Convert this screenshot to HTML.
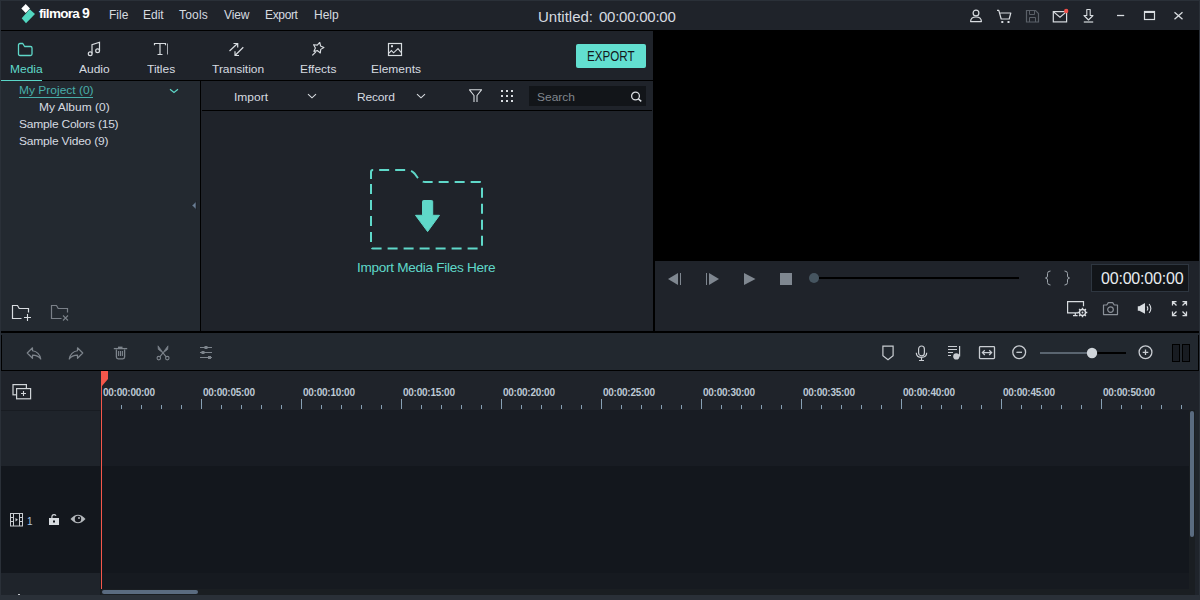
<!DOCTYPE html><html><head><meta charset="utf-8"><style>
html,body{margin:0;padding:0;width:1200px;height:600px;overflow:hidden;background:#1e2229;font-family:"Liberation Sans", sans-serif;}
body{position:relative}
svg{display:block}
</style></head><body>
<div style="position:absolute;left:0px;top:0px;width:1200px;height:600px;background:#2a3038;"></div><div style="position:absolute;left:1px;top:1px;width:1198px;height:29px;background:#1f232a;"></div><div style="position:absolute;left:1px;top:30px;width:1198px;height:1px;background:#000;"></div><svg style="position:absolute;left:16px;top:2px;" width="22" height="24" viewBox="0 0 22 24"><path d="M9.7 2 L14 6.5 L9.7 11 L5.3 6.5 Z" fill="#fff"/><path d="M13.7 7.3 L19 12 L10 21.3 L5.7 16.3 Z" fill="#52d6c0"/></svg><div style="position:absolute;left:39px;top:6.57px;font-size:13.5px;line-height:13.5px;color:#fff;white-space:nowrap;font-weight:bold;letter-spacing:-0.7px;">filmora</div><div style="position:absolute;left:82px;top:6.15px;font-size:14px;line-height:14px;color:#fff;white-space:nowrap;font-weight:bold;">9</div><div style="position:absolute;left:109px;top:8.84px;font-size:12px;line-height:12px;color:#d6dbe0;white-space:nowrap;letter-spacing:0px;">File</div><div style="position:absolute;left:143px;top:8.84px;font-size:12px;line-height:12px;color:#d6dbe0;white-space:nowrap;letter-spacing:0px;">Edit</div><div style="position:absolute;left:179px;top:8.84px;font-size:12px;line-height:12px;color:#d6dbe0;white-space:nowrap;letter-spacing:0.2px;">Tools</div><div style="position:absolute;left:224px;top:8.84px;font-size:12px;line-height:12px;color:#d6dbe0;white-space:nowrap;letter-spacing:-0.1px;">View</div><div style="position:absolute;left:265px;top:8.84px;font-size:12px;line-height:12px;color:#d6dbe0;white-space:nowrap;letter-spacing:-0.35px;">Export</div><div style="position:absolute;left:314px;top:8.84px;font-size:12px;line-height:12px;color:#d6dbe0;white-space:nowrap;letter-spacing:0px;">Help</div><div style="position:absolute;left:538px;top:9.30px;font-size:15px;line-height:15px;color:#d6dbe0;white-space:nowrap;letter-spacing:0px;">Untitled:</div><div style="position:absolute;left:599px;top:9.30px;font-size:15px;line-height:15px;color:#d6dbe0;white-space:nowrap;letter-spacing:-0.25px;">00:00:00:00</div><svg style="position:absolute;left:968px;top:8px;" width="16" height="16" viewBox="0 0 16 16"><circle cx="8" cy="5" r="2.9" fill="none" stroke="#d8dce0" stroke-width="1.2"/><path d="M2.6 13.6 Q2.6 9 8 9 Q13.4 9 13.4 13.6 Z" fill="none" stroke="#d8dce0" stroke-width="1.2" stroke-linejoin="round"/></svg><svg style="position:absolute;left:996px;top:8px;" width="18" height="16" viewBox="0 0 18 16"><path d="M1 2.3 H2.8 L5.2 11 H13.2 L14.8 5 H4.2" fill="none" stroke="#d8dce0" stroke-width="1.2" stroke-linejoin="round"/><rect x="5.3" y="13" width="2" height="2" fill="#d8dce0"/><rect x="11.5" y="13" width="2" height="2" fill="#d8dce0"/></svg><svg style="position:absolute;left:1025px;top:9px;" width="15" height="14" viewBox="0 0 15 14"><path d="M1.5 1.5 H10.5 L13.5 4.5 V13 H1.5 Z" fill="none" stroke="#5a6068" stroke-width="1.2"/><path d="M4.5 1.5 V5.5 H9.5 V1.5 M4.5 13 V8.5 H10.5 V13" fill="none" stroke="#5a6068" stroke-width="1"/></svg><svg style="position:absolute;left:1051px;top:8px;" width="19" height="16" viewBox="0 0 19 16"><rect x="2.3" y="3.6" width="13.3" height="10.3" fill="none" stroke="#d8dce0" stroke-width="1.2"/><path d="M2.3 3.6 L9 9.2 L15.6 3.6" fill="none" stroke="#d8dce0" stroke-width="1.2"/><circle cx="15.2" cy="3" r="2.2" fill="#f0504a"/></svg><svg style="position:absolute;left:1082px;top:8px;" width="14" height="16" viewBox="0 0 14 16"><path d="M4.8 1.5 H8.2 V7.5 H11 L6.5 12 L2 7.5 H4.8 Z" fill="none" stroke="#d8dce0" stroke-width="1.1" stroke-linejoin="round"/><path d="M1.8 14 H11.2" stroke="#d8dce0" stroke-width="1.2"/></svg><svg style="position:absolute;left:1116px;top:14px;" width="10" height="3" viewBox="0 0 10 3"><path d="M1 1.5 H8.2" stroke="#d8dce0" stroke-width="1.3"/></svg><svg style="position:absolute;left:1143px;top:10px;" width="13" height="11" viewBox="0 0 13 11"><rect x="1.5" y="1.5" width="10" height="8" fill="none" stroke="#d8dce0" stroke-width="1.2"/><path d="M1 2 H12" stroke="#d8dce0" stroke-width="2"/></svg><svg style="position:absolute;left:1173px;top:10px;" width="11" height="11" viewBox="0 0 11 11"><path d="M1.5 2.3 L9.5 9.3 M9.5 2.3 L1.5 9.3" stroke="#d8dce0" stroke-width="1.3"/></svg><div style="position:absolute;left:1px;top:31px;width:652px;height:49px;background:#1f232a;"></div><div style="position:absolute;left:1px;top:80px;width:652px;height:1px;background:#000;"></div><div style="position:absolute;left:1px;top:80px;width:41px;height:1px;background:#5ad6c8;"></div><svg style="position:absolute;left:17px;top:41px;" width="17" height="16" viewBox="0 0 17 16"><path d="M1.5 4 Q1.5 2.5 3 2.5 H5.8 L7.6 5.5 H13.5 Q15 5.5 15 7 V13 Q15 14.5 13.5 14.5 H3 Q1.5 14.5 1.5 13 Z" fill="none" stroke="#5fd8c9" stroke-width="1.3" stroke-linejoin="round"/></svg><div style="position:absolute;left:10px;top:63.69px;font-size:11px;line-height:11px;color:#5fd8c9;white-space:nowrap;transform:scaleX(1.09);transform-origin:0 0;">Media</div><svg style="position:absolute;left:87px;top:41px;" width="15" height="16" viewBox="0 0 15 16"><path d="M5 12.5 V3.8 L12.5 1.3 V9.8" fill="none" stroke="#d8dce0" stroke-width="1.2"/><circle cx="3.2" cy="12.8" r="1.9" fill="none" stroke="#d8dce0" stroke-width="1.2"/><circle cx="10.6" cy="9.8" r="1.9" fill="none" stroke="#d8dce0" stroke-width="1.2"/></svg><div style="position:absolute;left:79px;top:63.69px;font-size:11px;line-height:11px;color:#d6dbe0;white-space:nowrap;transform:scaleX(1.09);transform-origin:0 0;">Audio</div><svg style="position:absolute;left:153px;top:42px;" width="16" height="15" viewBox="0 0 16 15"><path d="M1.5 3.2 V1.5 H12.5 V3.2 M7 1.5 V12.5 M4.5 12.5 H9.5" fill="none" stroke="#d8dce0" stroke-width="1.2"/><path d="M14.5 1.5 V12.5" stroke="#b8bcc2" stroke-width="0.9"/></svg><div style="position:absolute;left:147px;top:63.69px;font-size:11px;line-height:11px;color:#d6dbe0;white-space:nowrap;transform:scaleX(1.09);transform-origin:0 0;">Titles</div><svg style="position:absolute;left:228px;top:42px;" width="17" height="15" viewBox="0 0 17 15"><path d="M1.5 9 L9.5 1.5 M5.5 1.5 H9.7 V5.5 M15.3 5.3 L7 13.5 M11 13.5 H7 V9.3" fill="none" stroke="#d8dce0" stroke-width="1.2"/></svg><div style="position:absolute;left:212px;top:63.69px;font-size:11px;line-height:11px;color:#d6dbe0;white-space:nowrap;transform:scaleX(1.09);transform-origin:0 0;">Transition</div><svg style="position:absolute;left:310px;top:42px;" width="16" height="15" viewBox="0 0 16 15"><path d="M9.75 0.39 L10.55 3.97 L13.89 5.51 L10.73 7.38 L10.31 11.03 L7.55 8.60 L3.95 9.32 L5.40 5.95 L3.60 2.75 L7.26 3.09 Z" fill="none" stroke="#d8dce0" stroke-width="1.15" stroke-linejoin="round"/><path d="M2.3 13.3 L5.8 9.8" stroke="#d8dce0" stroke-width="1.2"/></svg><div style="position:absolute;left:300px;top:63.69px;font-size:11px;line-height:11px;color:#d6dbe0;white-space:nowrap;transform:scaleX(1.09);transform-origin:0 0;">Effects</div><svg style="position:absolute;left:387px;top:42px;" width="16" height="15" viewBox="0 0 16 15"><rect x="1.5" y="1.5" width="13" height="12" fill="none" stroke="#d8dce0" stroke-width="1.2"/><rect x="4" y="3.2" width="2" height="2" fill="#d8dce0"/><path d="M2 11.2 L4.4 8.6 L6.6 10.8 L11 6.6 L14 10.4" fill="none" stroke="#d8dce0" stroke-width="1.1"/></svg><div style="position:absolute;left:371px;top:63.69px;font-size:11px;line-height:11px;color:#d6dbe0;white-space:nowrap;transform:scaleX(1.09);transform-origin:0 0;">Elements</div><div style="position:absolute;left:576px;top:44px;width:70px;height:24px;background:#62dfd0;border-radius:2px;"></div><div style="position:absolute;left:587px;top:49.15px;font-size:14px;line-height:14px;color:#14181d;white-space:nowrap;transform:scaleX(0.83);transform-origin:0 0;">EXPORT</div><div style="position:absolute;left:1px;top:81px;width:199px;height:250px;background:#232930;"></div><div style="position:absolute;left:200px;top:81px;width:1px;height:250px;background:#000;"></div><div style="position:absolute;left:19px;top:84.69px;font-size:11px;line-height:11px;color:#48aeaa;white-space:nowrap;transform:scaleX(1.09);transform-origin:0 0;">My Project (0)</div><div style="position:absolute;left:19px;top:97px;width:74px;height:1px;background:#48aeaa;"></div><svg style="position:absolute;left:169px;top:87px;" width="11" height="8" viewBox="0 0 11 8"><path d="M1 2.3 L5 5.4 L9 2.3" fill="none" stroke="#5fd8c9" stroke-width="1.2"/></svg><div style="position:absolute;left:39px;top:101.69px;font-size:11px;line-height:11px;color:#d6dbe0;white-space:nowrap;transform:scaleX(1.09);transform-origin:0 0;">My Album (0)</div><div style="position:absolute;left:19px;top:118.69px;font-size:11px;line-height:11px;color:#d6dbe0;white-space:nowrap;transform:scaleX(1.09);transform-origin:0 0;letter-spacing:-0.2px;">Sample Colors (15)</div><div style="position:absolute;left:19px;top:135.69px;font-size:11px;line-height:11px;color:#d6dbe0;white-space:nowrap;transform:scaleX(1.09);transform-origin:0 0;letter-spacing:-0.18px;">Sample Video (9)</div><svg style="position:absolute;left:190px;top:200px;" width="8" height="11" viewBox="0 0 8 11"><path d="M6 1.5 L2 5.5 L6 9.5 Z" fill="#6a7e95" stroke="#15191e" stroke-width="0.6" stroke-linejoin="round"/></svg><svg style="position:absolute;left:11px;top:303px;" width="23" height="19" viewBox="0 0 23 19"><path d="M10.5 15.5 H1.5 V2.5 H6.5 L8.2 5.5 H17.5 V9.5" fill="none" stroke="#d8dce0" stroke-width="1.2"/><path d="M16.5 11 V18 M13 14.5 H20" stroke="#d8dce0" stroke-width="1.1"/></svg><svg style="position:absolute;left:50px;top:303px;" width="23" height="19" viewBox="0 0 23 19"><path d="M11.5 15.5 H1.5 V2.5 H6.5 L8.2 5.5 H17.5 V9.5" fill="none" stroke="#7a8088" stroke-width="1.2"/><path d="M13 12.5 L18 17.5 M18 12.5 L13 17.5" stroke="#7a8088" stroke-width="1.1"/></svg><div style="position:absolute;left:201px;top:81px;width:452px;height:250px;background:#1f232a;"></div><div style="position:absolute;left:202px;top:110px;width:450px;height:1px;background:#000;"></div><div style="position:absolute;left:234px;top:91.69px;font-size:11px;line-height:11px;color:#d6dbe0;white-space:nowrap;transform:scaleX(1.09);transform-origin:0 0;">Import</div><svg style="position:absolute;left:306px;top:91px;" width="12" height="8" viewBox="0 0 12 8"><path d="M2 3.2 L6 6.8 L10 3.2" fill="none" stroke="#d8dce0" stroke-width="1.1"/></svg><div style="position:absolute;left:357px;top:91.69px;font-size:11px;line-height:11px;color:#d6dbe0;white-space:nowrap;transform:scaleX(1.09);transform-origin:0 0;letter-spacing:-0.15px;">Record</div><svg style="position:absolute;left:415px;top:91px;" width="12" height="8" viewBox="0 0 12 8"><path d="M2 3.2 L6 6.8 L10 3.2" fill="none" stroke="#d8dce0" stroke-width="1.1"/></svg><svg style="position:absolute;left:468px;top:88px;" width="16" height="15" viewBox="0 0 16 15"><path d="M9 14 V7.5 L13.5 1.8 H1.5 L6 7.5 V14" fill="none" stroke="#d8dce0" stroke-width="1.1" stroke-linejoin="round"/></svg><svg style="position:absolute;left:500px;top:89px;" width="14" height="14" viewBox="0 0 14 14"><rect x="1" y="1" width="2" height="2" fill="#d8dce0"/><rect x="1" y="6" width="2" height="2" fill="#d8dce0"/><rect x="1" y="11" width="2" height="2" fill="#d8dce0"/><rect x="6" y="1" width="2" height="2" fill="#d8dce0"/><rect x="6" y="6" width="2" height="2" fill="#d8dce0"/><rect x="6" y="11" width="2" height="2" fill="#d8dce0"/><rect x="11" y="1" width="2" height="2" fill="#d8dce0"/><rect x="11" y="6" width="2" height="2" fill="#d8dce0"/><rect x="11" y="11" width="2" height="2" fill="#d8dce0"/></svg><div style="position:absolute;left:529px;top:86px;width:117px;height:20px;background:#121519;"></div><div style="position:absolute;left:537px;top:91.69px;font-size:11px;line-height:11px;color:#80868d;white-space:nowrap;transform:scaleX(1.09);transform-origin:0 0;">Search</div><svg style="position:absolute;left:630px;top:90px;" width="13" height="13" viewBox="0 0 13 13"><circle cx="5.5" cy="6" r="3.9" fill="none" stroke="#d8dce0" stroke-width="1.3"/><path d="M8.3 8.8 L11.3 11.3" stroke="#d8dce0" stroke-width="1.5"/></svg><svg style="position:absolute;left:368px;top:167px;" width="117" height="85" viewBox="0 0 117 85"><path d="M3 14 V5 Q3 3 5 3 H39.5 Q43.5 3 46.5 6.5 L49.5 10.5 Q53 15 57 15 H112 Q114 15 114 17 V79.6 Q114 81.6 112 81.6 H5 Q3 81.6 3 79.6 Z" fill="none" stroke="#5fd8c9" stroke-width="2" stroke-dasharray="10 6" stroke-dashoffset="-2"/><path d="M54.5 34.5 Q54.5 33.5 55.5 33.5 H63.7 Q64.7 33.5 64.7 34.5 V48.3 H71.5 L59.6 64.6 L47.5 48.3 H54.5 Z" fill="#5fd8c9" stroke="#5fd8c9" stroke-width="1" stroke-linejoin="round"/></svg><div style="position:absolute;left:357px;top:261.49px;font-size:13.6px;line-height:13.6px;color:#5fd8c9;white-space:nowrap;letter-spacing:-0.3px;">Import Media Files Here</div><div style="position:absolute;left:653px;top:31px;width:546px;height:230px;background:#000;"></div><div style="position:absolute;left:653px;top:261px;width:2px;height:70px;background:#000;"></div><div style="position:absolute;left:655px;top:261px;width:544px;height:70px;background:#1f232a;"></div><svg style="position:absolute;left:667px;top:272px;" width="16" height="14" viewBox="0 0 16 14"><path d="M11 1 V13 L1 7 Z" fill="#7f8790"/><rect x="13" y="1" width="1" height="12" fill="#7f8790"/></svg><svg style="position:absolute;left:705px;top:272px;" width="16" height="14" viewBox="0 0 16 14"><rect x="1" y="1" width="1" height="12" fill="#7f8790"/><path d="M4 1 V13 L14 7 Z" fill="#7f8790"/></svg><svg style="position:absolute;left:743px;top:272px;" width="14" height="14" viewBox="0 0 14 14"><path d="M1 1 V13 L12.5 7 Z" fill="#7f8790"/></svg><div style="position:absolute;left:780px;top:273px;width:12px;height:12px;background:#7f8790;"></div><div style="position:absolute;left:819px;top:277px;width:200px;height:2px;background:#000;"></div><svg style="position:absolute;left:808px;top:272px;" width="12" height="12" viewBox="0 0 12 12"><circle cx="6" cy="6" r="5" fill="#465560"/></svg><svg style="position:absolute;left:1044px;top:270px;" width="8" height="16" viewBox="0 0 8 16"><path d="M6.5 1 Q3.5 1 3.5 3.5 V6 Q3.5 8 1.5 8 Q3.5 8 3.5 10 V12.5 Q3.5 15 6.5 15" fill="none" stroke="#a0a7ae" stroke-width="1"/></svg><svg style="position:absolute;left:1063px;top:270px;" width="8" height="16" viewBox="0 0 8 16"><path d="M1.5 1 Q4.5 1 4.5 3.5 V6 Q4.5 8 6.5 8 Q4.5 8 4.5 10 V12.5 Q4.5 15 1.5 15" fill="none" stroke="#a0a7ae" stroke-width="1"/></svg><div style="position:absolute;left:1091px;top:264px;width:98px;height:28px;background:#2e3640;"></div><div style="position:absolute;left:1092px;top:265px;width:96px;height:26px;background:#121519;"></div><div style="position:absolute;left:1101px;top:270.96px;font-size:16px;line-height:16px;color:#e8ecf0;white-space:nowrap;letter-spacing:-0.2px;">00:00:00:00</div><svg style="position:absolute;left:1065px;top:299px;" width="24" height="20" viewBox="0 0 24 20"><path d="M18.5 7.2 V2.6 H2.6 V13.8 H13.2 M10.3 13.8 V16.6 M8 16.6 H12.6" fill="none" stroke="#d8dce0" stroke-width="1.2"/><circle cx="17.5" cy="13.5" r="3" fill="none" stroke="#d8dce0" stroke-width="1.3"/><path d="M20.70 13.50 L22.30 13.50 M19.76 15.76 L20.89 16.89 M17.50 16.70 L17.50 18.30 M15.24 15.76 L14.11 16.89 M14.30 13.50 L12.70 13.50 M15.24 11.24 L14.11 10.11 M17.50 10.30 L17.50 8.70 M19.76 11.24 L20.89 10.11" stroke="#d8dce0" stroke-width="1.4"/><circle cx="17.5" cy="13.5" r="0.9" fill="#d8dce0"/></svg><svg style="position:absolute;left:1102px;top:300px;" width="17" height="16" viewBox="0 0 17 16"><path d="M1.5 5 H4.8 L6.3 2.6 H10.7 L12.2 5 H15.5 V14.6 H1.5 Z" fill="none" stroke="#8a9098" stroke-width="1.2" stroke-linejoin="round"/><circle cx="8.5" cy="9.6" r="2.8" fill="none" stroke="#8a9098" stroke-width="1.2"/></svg><svg style="position:absolute;left:1137px;top:302px;" width="16" height="13" viewBox="0 0 16 13"><path d="M0.8 4.2 H2.3 L8 1 V11.8 L2.3 8.8 H0.8 Z" fill="#d8dce0"/><path d="M10 4.3 Q11.6 6.4 10 8.5 M12.1 2 Q15.6 6.4 12.1 10.8" fill="none" stroke="#d8dce0" stroke-width="1.1"/></svg><svg style="position:absolute;left:1171px;top:300px;" width="17" height="17" viewBox="0 0 17 17"><path d="M1.5 5.5 V1.5 H5.5 M1.5 1.5 L5.5 5.5 M15.5 5.5 V1.5 H11.5 M15.5 1.5 L11.5 5.5 M1.5 11.5 V15.5 H5.5 M1.5 15.5 L5.5 11.5 M15.5 11.5 V15.5 H11.5 M15.5 15.5 L11.5 11.5" fill="none" stroke="#d8dce0" stroke-width="1.25"/></svg><div style="position:absolute;left:1px;top:331px;width:1198px;height:2px;background:#000;"></div><div style="position:absolute;left:1px;top:333px;width:1198px;height:261px;background:#22282f;"></div><div style="position:absolute;left:1px;top:335px;width:1198px;height:36px;background:#000;"></div><div style="position:absolute;left:2px;top:335px;width:1196px;height:35px;background:#22282f;"></div><svg style="position:absolute;left:24px;top:344px;" width="20" height="20" viewBox="0 0 20 20"><g transform="translate(1,0) scale(0.75)"><path d="M10 9 V5 L3 12 L10 19 V14.9 C15 14.9 18.5 16.5 21 20 C20 15 17 10 10 9 Z" fill="none" stroke="#7d848c" stroke-width="1.6" stroke-linejoin="round"/></g></svg><svg style="position:absolute;left:66px;top:344px;" width="20" height="20" viewBox="0 0 20 20"><g transform="translate(19,0) scale(-0.75,0.75)"><path d="M10 9 V5 L3 12 L10 19 V14.9 C15 14.9 18.5 16.5 21 20 C20 15 17 10 10 9 Z" fill="none" stroke="#7d848c" stroke-width="1.6" stroke-linejoin="round"/></g></svg><svg style="position:absolute;left:113px;top:346px;" width="15" height="15" viewBox="0 0 15 15"><path d="M0.8 2.6 H14.2" stroke="#7d848c" stroke-width="1.3"/><rect x="5" y="0.6" width="4.5" height="1.5" fill="#7d848c"/><path d="M3.4 3.5 V11 Q3.4 12.8 5.2 12.8 H9.8 Q11.6 12.8 11.6 11 V3.5" fill="none" stroke="#7d848c" stroke-width="1.3"/><path d="M5.6 5 V10 M7.5 5 V10 M9.4 5 V10" stroke="#7d848c" stroke-width="1.1"/></svg><svg style="position:absolute;left:155px;top:345px;" width="16" height="16" viewBox="0 0 16 16"><path d="M3 0.8 L5.4 4 L8.4 8.3 L3.3 4.4 Z M13 0.8 L10.6 4 L7.6 8.3 L12.7 4.4 Z" fill="#7d848c" stroke="#7d848c" stroke-width="0.7" stroke-linejoin="round"/><path d="M7.8 8.2 L5 11.6 M8.2 8.2 L11 11.6" stroke="#7d848c" stroke-width="1.1"/><circle cx="3.8" cy="13.1" r="1.75" fill="none" stroke="#7d848c" stroke-width="1.1"/><circle cx="12.3" cy="13.1" r="1.75" fill="none" stroke="#7d848c" stroke-width="1.1"/></svg><svg style="position:absolute;left:199px;top:345px;" width="15" height="16" viewBox="0 0 15 16"><path d="M1 2.5 H13 M1 7.5 H13 M1 12.5 H13" stroke="#7d848c" stroke-width="1.1"/><rect x="5.5" y="1" width="3" height="3" fill="#7d848c"/><rect x="2.5" y="6" width="3" height="3" fill="#7d848c"/><rect x="9" y="11" width="3" height="3" fill="#7d848c"/></svg><svg style="position:absolute;left:881px;top:345px;" width="14" height="17" viewBox="0 0 14 17"><path d="M1.9 1.1 H12.1 V10.8 L7 14.8 L1.9 10.8 Z" fill="none" stroke="#c9cdd2" stroke-width="1.2"/></svg><svg style="position:absolute;left:914px;top:345px;" width="15" height="17" viewBox="0 0 15 17"><rect x="4.6" y="1" width="5.8" height="9.8" rx="2.9" fill="none" stroke="#c9cdd2" stroke-width="1.2"/><path d="M2.3 7.8 Q2.3 12.3 7.5 12.3 Q12.7 12.3 12.7 7.8 M7.5 12.3 V15.5 M5 15.5 H10" fill="none" stroke="#c9cdd2" stroke-width="1.2"/></svg><svg style="position:absolute;left:947px;top:345px;" width="15" height="17" viewBox="0 0 15 17"><path d="M1 1.5 H10 M1 4.5 H10 M1 7.5 H6 M1 10.5 H4 M12.6 1 V11.5" stroke="#c9cdd2" stroke-width="1.2"/><circle cx="9.3" cy="11.4" r="3.1" fill="#c9cdd2"/></svg><svg style="position:absolute;left:978px;top:345px;" width="18" height="15" viewBox="0 0 18 15"><rect x="1.5" y="1.6" width="15" height="12" rx="0.8" fill="none" stroke="#c9cdd2" stroke-width="1.3"/><path d="M4.5 7.6 H13.5 M6.8 5.2 L4.4 7.6 L6.8 10 M11.2 5.2 L13.6 7.6 L11.2 10" fill="none" stroke="#c9cdd2" stroke-width="1.3"/></svg><svg style="position:absolute;left:1011px;top:345px;" width="16" height="16" viewBox="0 0 16 16"><circle cx="8.2" cy="7.3" r="6.4" fill="none" stroke="#c9cdd2" stroke-width="1.3"/><path d="M5.4 7.3 H11" stroke="#c9cdd2" stroke-width="1.3"/></svg><div style="position:absolute;left:1040px;top:352px;width:50px;height:2px;background:#5a6570;"></div><div style="position:absolute;left:1090px;top:352px;width:36px;height:2px;background:#000;"></div><svg style="position:absolute;left:1086px;top:347px;" width="12" height="12" viewBox="0 0 12 12"><circle cx="6" cy="6" r="5.2" fill="#d0d5da"/></svg><svg style="position:absolute;left:1138px;top:345px;" width="16" height="16" viewBox="0 0 16 16"><circle cx="7.5" cy="7.3" r="6.4" fill="none" stroke="#c9cdd2" stroke-width="1.3"/><path d="M4.7 7.3 H10.3 M7.5 4.5 V10.1" stroke="#c9cdd2" stroke-width="1.3"/></svg><div style="position:absolute;left:1172px;top:344px;width:8px;height:18px;background:#000;"></div><div style="position:absolute;left:1173px;top:345px;width:6px;height:16px;background:#181c22;"></div><div style="position:absolute;left:1182px;top:344px;width:8px;height:18px;background:#000;"></div><div style="position:absolute;left:1183px;top:345px;width:6px;height:16px;background:#181c22;"></div><div style="position:absolute;left:1px;top:371px;width:1198px;height:39px;background:#1f232a;"></div><svg style="position:absolute;left:11px;top:383px;" width="22" height="17" viewBox="0 0 22 17"><rect x="2" y="1.6" width="13.4" height="10.2" fill="none" stroke="#d0d4d8" stroke-width="1.2"/><rect x="5.6" y="5.6" width="14" height="10.2" fill="#1f232a" stroke="#d0d4d8" stroke-width="1.2"/><path d="M12.5 8 V13 M10 10.5 H15" stroke="#d0d4d8" stroke-width="1.1"/></svg><div style="position:absolute;left:103px;top:388.14px;font-size:10px;line-height:10px;color:#bcc8d4;white-space:nowrap;font-weight:bold;letter-spacing:-0.25px;">00:00:00:00</div><div style="position:absolute;left:203px;top:388.14px;font-size:10px;line-height:10px;color:#bcc8d4;white-space:nowrap;font-weight:bold;letter-spacing:-0.25px;">00:00:05:00</div><div style="position:absolute;left:303px;top:388.14px;font-size:10px;line-height:10px;color:#bcc8d4;white-space:nowrap;font-weight:bold;letter-spacing:-0.25px;">00:00:10:00</div><div style="position:absolute;left:403px;top:388.14px;font-size:10px;line-height:10px;color:#bcc8d4;white-space:nowrap;font-weight:bold;letter-spacing:-0.25px;">00:00:15:00</div><div style="position:absolute;left:503px;top:388.14px;font-size:10px;line-height:10px;color:#bcc8d4;white-space:nowrap;font-weight:bold;letter-spacing:-0.25px;">00:00:20:00</div><div style="position:absolute;left:603px;top:388.14px;font-size:10px;line-height:10px;color:#bcc8d4;white-space:nowrap;font-weight:bold;letter-spacing:-0.25px;">00:00:25:00</div><div style="position:absolute;left:703px;top:388.14px;font-size:10px;line-height:10px;color:#bcc8d4;white-space:nowrap;font-weight:bold;letter-spacing:-0.25px;">00:00:30:00</div><div style="position:absolute;left:803px;top:388.14px;font-size:10px;line-height:10px;color:#bcc8d4;white-space:nowrap;font-weight:bold;letter-spacing:-0.25px;">00:00:35:00</div><div style="position:absolute;left:903px;top:388.14px;font-size:10px;line-height:10px;color:#bcc8d4;white-space:nowrap;font-weight:bold;letter-spacing:-0.25px;">00:00:40:00</div><div style="position:absolute;left:1003px;top:388.14px;font-size:10px;line-height:10px;color:#bcc8d4;white-space:nowrap;font-weight:bold;letter-spacing:-0.25px;">00:00:45:00</div><div style="position:absolute;left:1103px;top:388.14px;font-size:10px;line-height:10px;color:#bcc8d4;white-space:nowrap;font-weight:bold;letter-spacing:-0.25px;">00:00:50:00</div><div style="position:absolute;left:101px;top:405px;width:1098px;height:4px;background:repeating-linear-gradient(90deg,#87a0b4 0,#87a0b4 1px,transparent 1px,transparent 20px);"></div><div style="position:absolute;left:101px;top:399px;width:1098px;height:10px;background:repeating-linear-gradient(90deg,#87a0b4 0,#87a0b4 1px,transparent 1px,transparent 100px);"></div><div style="position:absolute;left:1px;top:410px;width:99px;height:1px;background:#181c22;"></div><div style="position:absolute;left:1px;top:411px;width:99px;height:55px;background:#1f242b;"></div><div style="position:absolute;left:101px;top:410px;width:1088px;height:56px;background:#181c23;"></div><div style="position:absolute;left:1px;top:466px;width:100px;height:107px;background:#13171d;"></div><div style="position:absolute;left:101px;top:466px;width:1088px;height:107px;background:#13171d;"></div><div style="position:absolute;left:1px;top:573px;width:99px;height:22px;background:#1f242b;"></div><div style="position:absolute;left:101px;top:573px;width:1088px;height:16px;background:#161a20;"></div><div style="position:absolute;left:100px;top:410px;width:1px;height:185px;background:#171b20;"></div><svg style="position:absolute;left:9px;top:512px;" width="16" height="16" viewBox="0 0 16 16"><rect x="1.5" y="1.5" width="12" height="12.5" fill="none" stroke="#c8ccd0" stroke-width="1"/><path d="M4.5 1.5 V14 M10.5 1.5 V14 M1.5 5.5 H4.5 M1.5 9.5 H4.5 M10.5 5.5 H13.5 M10.5 9.5 H13.5" stroke="#c8ccd0" stroke-width="1"/><path d="M6.5 6 L9 7.7 L6.5 9.4 Z" fill="#c8ccd0"/></svg><div style="position:absolute;left:27px;top:516.53px;font-size:10px;line-height:10px;color:#b0c8e0;white-space:nowrap;">1</div><svg style="position:absolute;left:48px;top:513px;" width="12" height="13" viewBox="0 0 12 13"><path d="M3.9 5.2 V4 Q3.9 1.7 6 1.7 Q7.3 1.7 8 2.8" fill="none" stroke="#d0d4d8" stroke-width="1.2"/><rect x="1" y="5" width="10" height="7" fill="#d8dce0"/><rect x="5" y="7.5" width="2" height="2" fill="#13171d"/></svg><svg style="position:absolute;left:70px;top:514px;" width="16" height="10" viewBox="0 0 16 10"><path d="M0.5 5 Q8 -3.5 15.5 5 Q8 13.5 0.5 5 Z" fill="#b4b8bc"/><circle cx="8" cy="5" r="3.2" fill="#14171d"/><circle cx="9" cy="4" r="1" fill="#b4b8bc"/></svg><div style="position:absolute;left:101px;top:589px;width:1088px;height:6px;background:#1a1e22;"></div><div style="position:absolute;left:102px;top:590px;width:96px;height:4px;background:#5a6b80;border-radius:2px;"></div><div style="position:absolute;left:1189px;top:410px;width:6px;height:185px;background:#1a1e22;"></div><div style="position:absolute;left:1190px;top:411px;width:4px;height:126px;background:#5a6b80;border-radius:2px;"></div><div style="position:absolute;left:1195px;top:410px;width:4px;height:185px;background:#1f242b;"></div><div style="position:absolute;left:1px;top:595px;width:1198px;height:5px;background:#2a3038;"></div><div style="position:absolute;left:18px;top:594px;width:2px;height:1px;background:#c0c4c8;"></div><div style="position:absolute;left:101px;top:371px;width:1px;height:218px;background:#f5574b;"></div><svg style="position:absolute;left:101px;top:371px;" width="7" height="15" viewBox="0 0 7 15"><path d="M0 0 H7 V8 L1 15 H0 Z" fill="#f5574b"/></svg>
</body></html>
